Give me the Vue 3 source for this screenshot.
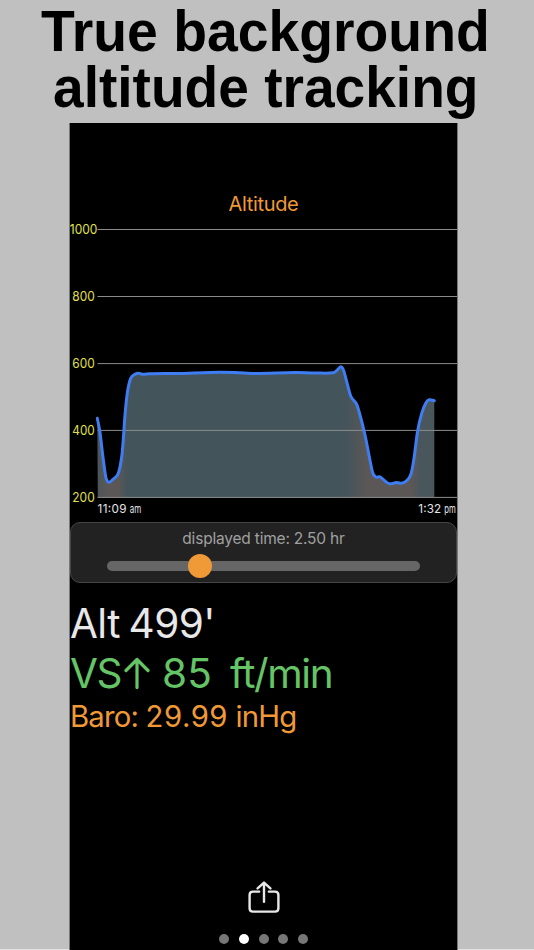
<template>
  <div class="promo">
    <h1 class="headline">
      <span class="headline-first">True background</span>
      <span class="headline-second">altitude tracking</span>
    </h1>

    <main class="phone">
      <h2 class="chart-title">Altitude</h2>

      <svg class="chart" viewBox="70 220 387 300" width="387" height="300">
        <defs>
          <linearGradient id="terrain" gradientUnits="userSpaceOnUse" x1="98" y1="0" x2="434" y2="0">
            <stop v-for="s in stops" :key="s.x" :offset="(s.x - 98) / 336" :stop-color="s.color" />
          </linearGradient>
        </defs>
        <path :d="areaPath" fill="url(#terrain)" />
        <g v-for="tick in ticks" :key="tick.value">
          <line class="grid" x1="97.5" x2="457" :y1="tick.y" :y2="tick.y" />
          <text
            class="tick"
            :x="tick.value === 1000 ? 69.8 : 72.3"
            :y="tick.y + 4.7"
            :textLength="tick.value === 1000 ? 27.6 : 22.4"
            lengthAdjust="spacingAndGlyphs"
          >{{ tick.value }}</text>
        </g>
        <path class="curve" :d="linePath" />
        <text class="time" x="97.5" y="512.5" textLength="29">11:09</text>
        <text class="time meridiem" x="129.8" y="512.5" textLength="11.5" lengthAdjust="spacingAndGlyphs">am</text>
        <text class="time" x="418.2" y="512.5" textLength="23">1:32</text>
        <text class="time meridiem" x="444.3" y="512.5" textLength="11.5" lengthAdjust="spacingAndGlyphs">pm</text>
      </svg>

      <section class="range">
        <p class="range-label">displayed time: {{ hours.toFixed(2) }} hr</p>
        <div class="track">
          <span class="thumb" :style="{ left: `${thumb}px` }"></span>
        </div>
      </section>

      <section class="readings">
        <p class="alt">Alt 499'</p>
        <p class="vs">
          <span class="vs-name">VS</span>
          <svg class="arrow" viewBox="0 0 26 32" width="26" height="32">
            <path d="M13 30.5V3M2 13.5L13 2.5L24 13.5" />
          </svg>
          <span class="vs-value">85</span>
          <span class="vs-unit">ft/min</span>
        </p>
        <p class="baro">Baro: <span class="baro-value">29.99</span> inHg</p>
      </section>

      <footer class="footer">
        <svg class="share" viewBox="0 0 32 32" width="32" height="32">
          <path d="M11.2 10.6H5Q1.6 10.6 1.6 14V27.2Q1.6 30.6 5 30.6H27Q30.4 30.6 30.4 27.2V14Q30.4 10.6 27 10.6H20.8" />
          <path d="M16 20.7V2M9.6 7.4L16 1.6L22.4 7.4" />
        </svg>
        <div class="dots">
          <span v-for="n in 5" :key="n" class="dot" :class="{ active: n === page }"></span>
        </div>
      </footer>
    </main>
  </div>
</template>

<script setup>
import { ref, computed } from 'vue'

const hours = ref(2.5)
const thumb = ref(93)
const page = ref(2)

const ticks = [
  { value: 1000, y: 229.5 },
  { value: 800, y: 296.5 },
  { value: 600, y: 363.6 },
  { value: 400, y: 430.4 },
  { value: 200, y: 497.4 },
]

const stops = [
  { x: 98, color: '#4b5559' },
  { x: 107, color: '#5a5756' },
  { x: 119, color: '#5a5756' },
  { x: 127, color: '#43545b' },
  { x: 343, color: '#43545b' },
  { x: 353, color: '#4b5559' },
  { x: 366, color: '#5a5756' },
  { x: 412, color: '#5a5756' },
  { x: 420, color: '#49565c' },
  { x: 434, color: '#49565c' },
]

const points = [
  [97.3, 418.3], [100, 432.5], [102.7, 455], [106, 478], [109, 482.2], [113.3, 479],
  [118.3, 473.3], [121.7, 456.7], [123.5, 436.7], [125, 415], [127.5, 391.7],
  [130.7, 378.3], [135, 374.3], [138.3, 373.2], [142, 374.2], [150, 373.8],
  [180, 373.4], [210, 372.4], [235, 372.5], [255, 373.4], [295, 372.5], [315, 373],
  [333.5, 372.8], [337.3, 370], [341, 366.8], [343.7, 370.7], [346.7, 381.7],
  [350.7, 396], [356.7, 404.3], [360, 415], [365, 435], [369.3, 456.7],
  [372.7, 472.7], [375.7, 477], [380, 476.9], [385, 481], [389.3, 483.8],
  [396.7, 482.6], [401.7, 483.2], [406.7, 480.7], [411, 474], [414, 458.3],
  [417.5, 431.7], [421.7, 413.3], [426, 402.7], [429.3, 399.8], [434.3, 400.7],
]

// Catmull-Rom spline through the samples
const linePath = computed(() => {
  let d = `M${points[0]}`
  for (let i = 0; i < points.length - 1; i++) {
    const a = points[i - 1] || points[i]
    const b = points[i]
    const c = points[i + 1]
    const e = points[i + 2] || c
    // keep the handles inside the current segment
    const limit = (c[0] - b[0]) / 3
    const t1 = limit / ((c[0] - a[0]) || 1)
    const t2 = limit / ((e[0] - b[0]) || 1)
    const y1 = b[1] + (c[1] - a[1]) * t1
    const y2 = c[1] - (e[1] - b[1]) * t2
    d += `C${b[0] + limit},${y1} ${c[0] - limit},${y2} ${c[0]},${c[1]}`
  }
  return d
})

const areaPath = computed(() => `${linePath.value}V497.4H97.8Z`)
</script>

<style>
body {
  background: #c0c0c0;
  overflow: hidden;
}
</style>

<style scoped>
.promo {
  height: 950px;
  box-sizing: border-box;
  background: #c0c0c0;
  border-bottom: 1px solid #e2e2e2;
  font-family: Inter, "Liberation Sans", sans-serif;
}

h1,
h2,
p {
  margin: 0;
  font-weight: 400;
  white-space: nowrap;
}

.headline {
  height: 123px;
  padding-top: 3px;
  box-sizing: border-box;
  display: flex;
  flex-direction: column;
  align-items: flex-start;
  font: bold 57.5px/56px "Liberation Sans", Arial, sans-serif;
  color: #000;
}

.headline span {
  transform-origin: 0 0;
}

.headline-first {
  margin-left: 41.3px;
  transform: scaleX(0.962);
}

.headline-second {
  margin-left: 53px;
  transform: scaleX(0.958);
}

.phone {
  width: 387px;
  height: 827px;
  margin-left: 69px;
  border-left: 1px solid #777;
  border-right: 1px solid #777;
  background: #000;
  display: flex;
  flex-direction: column;
}

.chart-title {
  height: 97px;
  padding-top: 68px;
  box-sizing: border-box;
  text-align: center;
  font-size: 20px;
  line-height: 26px;
  letter-spacing: -0.35px;
  color: #f09a37;
}

.chart {
  display: block;
  flex: none;
}

.grid {
  stroke: #8c8c8c;
  stroke-width: 1;
}

.tick {
  font-size: 13px;
  fill: #e0e04a;
}

.curve {
  fill: none;
  stroke: #3f7df2;
  stroke-width: 3;
  stroke-linecap: round;
  stroke-linejoin: round;
}

.time {
  font-size: 11.7px;
  fill: #e4e4e4;
}

.meridiem {
  font-size: 11.5px;
}

.range {
  height: 61px;
  margin-top: 2px;
  box-sizing: border-box;
  border: 1px solid #454545;
  border-radius: 10px;
  background: #222;
  flex: none;
}

.range-label {
  padding-top: 5px;
  text-align: center;
  font-size: 15.5px;
  line-height: 21px;
  letter-spacing: -0.2px;
  color: #a0a0a0;
}

.track {
  position: relative;
  width: 313px;
  height: 10px;
  margin: 12px 0 0 36px;
  border-radius: 5px;
  background: #666;
}

.thumb {
  position: absolute;
  top: -7px;
  width: 24px;
  height: 24px;
  border-radius: 50%;
  background: #f09a37;
  transform: translateX(-50%);
}

.readings {
  padding-top: 16px;
  flex: none;
}

.alt,
.vs {
  height: 50px;
  font-size: 40.5px;
  line-height: 50px;
}

.alt {
  letter-spacing: -0.6px;
  word-spacing: -2px;
  color: #e8e8e8;
}

.vs {
  display: flex;
  color: #65c466;
}

.vs-name {
  width: 53px;
  letter-spacing: -1.5px;
}

.arrow {
  margin: 8px 0 0 0.5px;
  fill: none;
  stroke: #65c466;
  stroke-width: 3.2;
  stroke-linecap: round;
  stroke-linejoin: round;
}

.vs-value {
  width: 50px;
  margin-left: 12.5px;
  letter-spacing: 0.3px;
}

.vs-unit {
  margin-left: 18px;
  letter-spacing: -1.4px;
}

.baro {
  font-size: 29.3px;
  line-height: 36px;
  letter-spacing: -0.8px;
  color: #f09a37;
}

.baro-value {
  letter-spacing: 0.5px;
}

.footer {
  margin-top: auto;
  display: flex;
  flex-direction: column;
  align-items: center;
}

.share {
  fill: none;
  stroke: #e8e8e8;
  stroke-width: 2.4;
  stroke-linecap: round;
  stroke-linejoin: round;
}

.dots {
  display: flex;
  gap: 9.8px;
  margin: 21px 0 6.2px;
}

.dot {
  width: 10px;
  height: 10px;
  border-radius: 50%;
  background: #777;
}

.dot.active {
  background: #fff;
}
</style>
